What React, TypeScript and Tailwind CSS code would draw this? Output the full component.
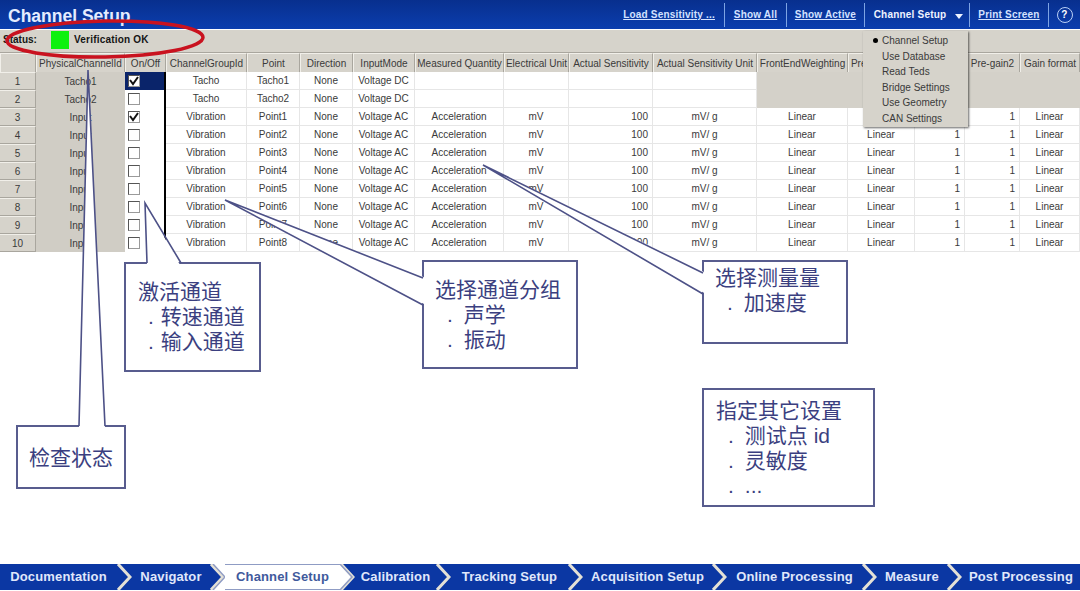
const columns = [
  { label: 'ChannelGroupId', width: 'w-[81px]' },
  { label: 'Point', width: 'w-[53px]' },
  { label: 'Direction', width: 'w-[53px]' },
  { label: 'InputMode', width: 'w-[62px]' },
  { label: 'Measured Quantity', width: 'w-[89px]' },
  { label: 'Electrical Unit', width: 'w-[65px]' },
  { label: 'Actual Sensitivity', width: 'w-[84px]' },
  { label: 'Actual Sensitivity Unit', width: 'w-[104px]' },
  { label: 'FrontEndWeighting', width: 'w-[91px]' },
  { label: 'Pre-weighting', width: 'w-[67px]' },
  { label: 'Pre-gain1', width: 'w-[50px]' },
  { label: 'Pre-gain2', width: 'w-[55px]' },
  { label: 'Gain format', width: 'w-[60px]' },
];

const rows = [
  { n: 1, name: 'Tacho1', group: 'Tacho', point: 'Tacho1', mode: 'Voltage DC', on: true, selected: true, tacho: true },
  { n: 2, name: 'Tacho2', group: 'Tacho', point: 'Tacho2', mode: 'Voltage DC', on: false, tacho: true },
  { n: 3, name: 'Input', group: 'Vibration', point: 'Point1', mode: 'Voltage AC', on: true },
  { n: 4, name: 'Input', group: 'Vibration', point: 'Point2', mode: 'Voltage AC', on: false },
  { n: 5, name: 'Input', group: 'Vibration', point: 'Point3', mode: 'Voltage AC', on: false },
  { n: 6, name: 'Input', group: 'Vibration', point: 'Point4', mode: 'Voltage AC', on: false },
  { n: 7, name: 'Input', group: 'Vibration', point: 'Point5', mode: 'Voltage AC', on: false },
  { n: 8, name: 'Input', group: 'Vibration', point: 'Point6', mode: 'Voltage AC', on: false },
  { n: 9, name: 'Input', group: 'Vibration', point: 'Point7', mode: 'Voltage AC', on: false },
  { n: 10, name: 'Input', group: 'Vibration', point: 'Point8', mode: 'Voltage AC', on: false },
];

const menuItems = ['Channel Setup', 'Use Database', 'Read Teds', 'Bridge Settings', 'Use Geometry', 'CAN Settings'];

const steps = [
  { label: 'Documentation', width: 'w-[117px]' },
  { label: 'Navigator', width: 'w-[78px]' },
  { label: 'Channel Setup', width: 'w-[115px]', active: true },
  { label: 'Calibration', width: 'w-[81px]' },
  { label: 'Tracking Setup', width: 'w-[117px]' },
  { label: 'Acquisition Setup', width: 'w-[129px]' },
  { label: 'Online Processing', width: 'w-[135px]' },
  { label: 'Measure', width: 'w-[70px]' },
  { label: 'Post Processing', width: 'w-[118px]' },
];

const BLUE = '#0b37a3';
const OUTLINE = '#8f9cc4';

// the arrow between two steps, the active step gets a thin blue outline on its edges
function Chevron({ left, right, leavingActive, enteringActive }: { left: string; right: string; leavingActive?: boolean; enteringActive?: boolean }) {
  return (
    <svg width="15" height="26" viewBox="0 0 15 26" className="shrink-0">
      <rect width="15" height="26" fill={right} />
      <polygon points="0,0 1,0 13,13 1,26 0,26" fill={left} />
      <polyline points="1,0 13,13 1,26" fill="none" stroke="#e4e1d6" strokeWidth={3} />
      {leavingActive && <polyline points="0,0 12,13 0,26" fill="none" stroke={OUTLINE} strokeWidth={1.5} />}
      {enteringActive && <polyline points="3,0 15,13 3,26" fill="none" stroke={OUTLINE} strokeWidth={1.5} />}
    </svg>
  );
}

function Check({ on }: { on: boolean }) {
  return (
    <div className="w-[12px] h-[12px] bg-white border border-[#9a9a9a] border-t-[#555] border-l-[#555] flex items-center justify-center">
      {on && (
        <svg width="10" height="10" viewBox="0 0 10 10">
          <polyline points="1,4 4,8 9,1" fill="none" stroke="#111" strokeWidth="2" />
        </svg>
      )}
    </div>
  );
}

function HeadCell({ label, width }: { label: string; width: string }) {
  return (
    <div className={`${width} shrink-0 h-full flex items-center justify-center overflow-hidden whitespace-nowrap bg-[#d6d3cb] border-r border-r-[#a9a69e] border-l border-l-[#f1efe9] border-t border-t-[#f1efe9]`}>
      {label}
    </div>
  );
}

function Cell({ width, children, gray, right }: { width: string; children?: React.ReactNode; gray?: boolean; right?: boolean }) {
  return (
    <div className={`${width} shrink-0 h-full flex items-center overflow-hidden whitespace-nowrap ${right ? 'justify-end pr-[4px]' : 'justify-center'} ${gray ? 'bg-[#d4d1c9]' : 'bg-white border-r border-b border-[#e6e6e6]'}`}>
      {children}
    </div>
  );
}

function Callout({ className, children }: { className: string; children: React.ReactNode }) {
  return (
    <div className={`absolute bg-white border-2 border-[#585c8e] text-[21px] leading-[25px] text-[#3b3f80] font-['Liberation_Sans','Noto_Sans_CJK_SC',sans-serif] ${className}`}>
      {children}
    </div>
  );
}

function Bullet({ children, wide }: { children: React.ReactNode; wide?: boolean }) {
  return (
    <div className={`flex ${wide ? 'ml-[12px] gap-[11px]' : 'ml-[10px] gap-[7px]'}`}>
      <span>.</span>
      <span>{children}</span>
    </div>
  );
}

function Wedge({ fill, line }: { fill: string; line: string }) {
  return (
    <>
      <polygon points={fill} fill="white" />
      <polyline points={line} fill="none" stroke="#4d5187" strokeWidth="1.6" />
    </>
  );
}

export default function App() {
  return (
    <div className="relative w-[1080px] h-[591px] overflow-hidden bg-white flex flex-col font-['Liberation_Sans',sans-serif] text-[10px] text-[#3a3a3a]">
      <header className="h-[30px] shrink-0 flex justify-between bg-gradient-to-b from-[#082f8e] to-[#0b3eae] border-b border-white">
        <h1 className="pl-[8px] pt-[5px] text-[17.5px] leading-[22px] font-bold text-[#e4ecff]">Channel Setup</h1>
        <div className="flex items-center font-bold text-[#d3e2ff] tracking-[0.2px]">
          <a className="underline pr-[9px] h-[24px] flex items-center">Load Sensitivity ...</a>
          <a className="underline w-[62px] h-[24px] flex items-center justify-center border-l border-[#7ea4e4]">Show All</a>
          <a className="underline w-[78px] h-[24px] flex items-center justify-center border-l border-[#7ea4e4]">Show Active</a>
          <div className="w-[105px] h-[24px] flex items-center justify-center gap-[9px] pl-[3px] border-l border-[#7ea4e4] text-[#eef3ff]">
            Channel Setup
            <svg width="8" height="5" viewBox="0 0 8 5" className="mt-[3px]">
              <polygon points="0,0 8,0 4,5" fill="#eef3ff" />
            </svg>
          </div>
          <a className="underline w-[79px] h-[24px] flex items-center justify-center border-l border-[#7ea4e4]">Print Screen</a>
          <div className="w-[32px] h-[24px] flex items-center justify-center border-l border-[#7ea4e4]">
            <span className="w-[16px] h-[16px] rounded-full border border-[#b9cff5] flex items-center justify-center text-white">?</span>
          </div>
        </div>
      </header>

      <div className="h-[23px] shrink-0 bg-[#d6d3cb] border-b border-[#a9a69e] flex items-center pl-[3px] pb-[3px] font-bold text-[#151515]">
        <span className="w-[48px]">Status:</span>
        <span className="w-[18px] h-[18px] bg-[#0cf10c] mr-[5px]" />
        <span className="tracking-[0.2px]">Verification OK</span>
      </div>

      <div className="flex flex-col">
        <div className="flex h-[19px]">
          <HeadCell label="" width="w-[36px]" />
          <HeadCell label="PhysicalChannelId" width="w-[89px]" />
          <HeadCell label="On/Off" width="w-[41px]" />
          {columns.map((c) => (
            <HeadCell key={c.label} label={c.label} width={c.width} />
          ))}
        </div>
        {rows.map((r) => (
          <div key={r.n} className="flex h-[18px]">
            <div className="w-[36px] shrink-0 flex items-center justify-center bg-[#d6d3cb] border-t border-t-[#f1efe9] border-b border-b-[#a9a69e] border-r border-r-[#a9a69e]">
              {r.n}
            </div>
            <div className="w-[89px] shrink-0 flex items-center justify-center bg-[#d0cdc5]">{r.name}</div>
            <div className={`w-[41px] shrink-0 flex items-center pl-[3px] border-r-2 border-black ${r.selected ? 'bg-[#0a246a]' : 'bg-white'}`}>
              <Check on={r.on} />
            </div>
            <Cell width={columns[0].width}>{r.group}</Cell>
            <Cell width={columns[1].width}>{r.point}</Cell>
            <Cell width={columns[2].width}>None</Cell>
            <Cell width={columns[3].width}>{r.mode}</Cell>
            <Cell width={columns[4].width}>{r.tacho ? '' : 'Acceleration'}</Cell>
            <Cell width={columns[5].width}>{r.tacho ? '' : 'mV'}</Cell>
            <Cell width={columns[6].width} right>{r.tacho ? '' : '100'}</Cell>
            <Cell width={columns[7].width}>{r.tacho ? '' : 'mV/ g'}</Cell>
            <Cell width={columns[8].width} gray={r.tacho}>{r.tacho ? '' : 'Linear'}</Cell>
            <Cell width={columns[9].width} gray={r.tacho}>{r.tacho ? '' : 'Linear'}</Cell>
            <Cell width={columns[10].width} gray={r.tacho} right>{r.tacho ? '' : '1'}</Cell>
            <Cell width={columns[11].width} gray={r.tacho} right>{r.tacho ? '' : '1'}</Cell>
            <Cell width={columns[12].width} gray={r.tacho}>{r.tacho ? '' : 'Linear'}</Cell>
          </div>
        ))}
      </div>

      <div className="flex-1" />

      <nav className="flex h-[26px] mb-[1px] font-bold text-[13px] tracking-[0.15px]">
        {steps.map((s, i) => {
          const next = steps[i + 1];
          return (
            <div key={s.label} className="flex">
              <div className={`${s.width} flex items-center justify-center whitespace-nowrap ${s.active ? 'bg-white text-[#3f5a9c] border-y border-[#8f9cc4]' : 'bg-[#0b37a3] text-[#e0e8fb]'}`}>
                {s.label}
              </div>
              {next && (
                <Chevron
                  left={s.active ? '#ffffff' : BLUE}
                  right={next.active ? '#ffffff' : BLUE}
                  leavingActive={s.active}
                  enteringActive={next.active}
                />
              )}
            </div>
          );
        })}
      </nav>

      {/* dropdown from the header */}
      <div className="absolute left-[863px] top-[31px] w-[105px] h-[96px] bg-[#d6d3cb] shadow-[1px_1px_2px_rgba(0,0,0,0.6)] pl-[19px] pt-[2px] text-[#3a3a3a]">
        {menuItems.map((m, i) => (
          <div key={m} className="relative h-[15.5px] leading-[15.5px] whitespace-nowrap">
            {i === 0 && <span className="absolute left-[-9px] top-[5px] w-[5px] h-[5px] rounded-full bg-black" />}
            {m}
          </div>
        ))}
      </div>

      {/* annotation boxes */}
      <Callout className="left-[124px] top-[262px] w-[137px] h-[110px] pl-[12px] pt-[15px]">
        <div>激活通道</div>
        <Bullet>转速通道</Bullet>
        <Bullet>输入通道</Bullet>
      </Callout>
      <Callout className="left-[422px] top-[260px] w-[156px] h-[109px] pl-[11px] pt-[15px]">
        <div>选择通道分组</div>
        <Bullet wide>声学</Bullet>
        <Bullet wide>振动</Bullet>
      </Callout>
      <Callout className="left-[702px] top-[260px] w-[146px] h-[84px] pl-[11px] pt-[3px]">
        <div>选择测量量</div>
        <Bullet wide>加速度</Bullet>
      </Callout>
      <Callout className="left-[16px] top-[425px] w-[110px] h-[64px] pl-[11px] pt-[18px]">
        <div>检查状态</div>
      </Callout>
      <Callout className="left-[702px] top-[388px] w-[173px] h-[119px] pl-[12px] pt-[8px]">
        <div>指定其它设置</div>
        <Bullet wide>测试点 id</Bullet>
        <Bullet wide>灵敏度</Bullet>
        <Bullet wide>...</Bullet>
      </Callout>

      <svg className="absolute left-0 top-0 pointer-events-none" width="1080" height="591" viewBox="0 0 1080 591">
        <Wedge fill="145,203 180,265 147,265" line="147,263 145,203 181,263" />
        <Wedge fill="225,200 426,278 426,305" line="423,278 225,200 423,305" />
        <Wedge fill="483,165 706,273 706,294" line="703,273 483,165 703,294" />
        <Wedge fill="88,70 105,428 79,428" line="79,426 88,70 105,426" />
        <ellipse cx="105" cy="39" rx="98" ry="18" fill="none" stroke="#c9121f" strokeWidth="3.5" transform="rotate(-1 105 39)" />
      </svg>
    </div>
  );
}
